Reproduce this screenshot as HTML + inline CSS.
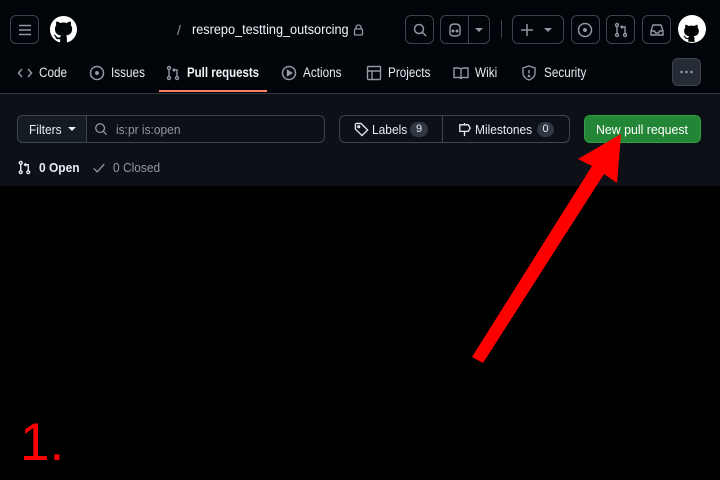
<!DOCTYPE html><html><head><style>
body{margin:0;width:720px;height:480px;background:#000;font-family:"Liberation Sans",sans-serif;position:relative;overflow:hidden;color:#e6edf3}
.top{position:absolute;left:0;top:0;width:720px;height:93px;background:#010409;border-bottom:1px solid #30363d}
.content{position:absolute;left:0;top:94px;width:720px;height:92px;background:#0d1117}
.b{position:absolute;border:1px solid #3d444d;border-radius:6px;box-sizing:border-box}
.t{position:absolute;font-size:13px;white-space:nowrap;transform-origin:left center}
.n{font-size:13.5px;transform:scaleX(0.87)}
.c{transform:scaleX(0.92)}
svg{position:absolute}
</style></head><body>
<div class="top">
<div class="b" style="left:10px;top:15px;width:29px;height:29px"></div>
<svg style="left:17px;top:22px" width="16" height="16" viewBox="0 0 16 16" fill="none" stroke="#9198a1" stroke-width="1.5"><path d="M2 3.5h12M2 8h12M2 12.5h12"/></svg>
<svg style="left:50px;top:16px" width="27" height="27" viewBox="0 0 16 16"><path fill="#fff" d="M8 0C3.58 0 0 3.580 0 8c0 3.54 2.290 6.53 5.470 7.59.4.07.55-.17.55-.38 0-.19-.01-.82-.01-1.49-2.010.37-2.530-.49-2.690-.94-.09-.23-.48-.94-.82-1.13-.28-.15-.68-.52-.01-.53.63-.01 1.080.58 1.230.82.72 1.210 1.870.87 2.330.66.07-.52.28-.87.51-1.07-1.780-.2-3.640-.89-3.640-3.950 0-.87.31-1.590.82-2.150-.08-.2-.36-1.020.08-2.120 0 0 .67-.21 2.200.82.64-.18 1.320-.27 2-.27s1.360.09 2 .27c1.530-1.040 2.200-.82 2.200-.82.44 1.100.16 1.920.08 2.120.51.56.82 1.270.82 2.150 0 3.070-1.870 3.750-3.650 3.950.29.25.54.73.54 1.480 0 1.070-.01 1.930-.01 2.200 0 .21.15.46.55.38A8.010 8.010 0 0016 8c0-4.420-3.580-8-8-8z"/></svg>
<div class="t" style="left:177px;top:22px;color:#9198a1;font-size:14px">/</div>
<div class="t" style="left:192px;top:22px;font-size:13.5px;color:#f0f6fc;transform:scaleX(0.94)">resrepo_testting_outsorcing</div>
<svg style="left:353px;top:24px" width="11" height="12" viewBox="0 0 11 12" fill="none" stroke="#9198a1" stroke-width="1.3"><rect x="1.5" y="5" width="8" height="6" rx="1"/><path d="M3 5V3.5a2.5 2.5 0 015 0V5"/></svg>
<div class="b" style="left:405px;top:15px;width:29px;height:29px"></div>
<svg style="left:412px;top:22px" width="16" height="16" viewBox="0 0 16 16" fill="none" stroke="#9198a1" stroke-width="1.5"><circle cx="7" cy="7" r="4.5"/><path d="M10.5 10.5L14 14"/></svg>
<div class="b" style="left:440px;top:15px;width:50px;height:29px"></div>
<div style="position:absolute;left:468px;top:16px;width:1px;height:27px;background:#3d444d"></div>
<svg style="left:447px;top:22px" width="16" height="16" viewBox="0 0 16 16" fill="none" stroke="#9198a1" stroke-width="1.4"><path d="M3 6c0-3 2-4 5-4s5 1 5 4v5c0 2-2 3-5 3s-5-1-5-3z"/><circle cx="6" cy="9" r=".8" fill="#9198a1"/><circle cx="10" cy="9" r=".8" fill="#9198a1"/></svg>
<svg style="left:475px;top:28px" width="8" height="5"><path d="M0 0h8L4 4z" fill="#9198a1"/></svg>
<div style="position:absolute;left:501px;top:20px;width:1px;height:18px;background:#3d444d"></div>
<div class="b" style="left:512px;top:15px;width:52px;height:29px"></div>
<svg style="left:519px;top:22px" width="16" height="16" viewBox="0 0 16 16" stroke="#9198a1" stroke-width="1.5"><path d="M8 2v12M2 8h12"/></svg>
<svg style="left:544px;top:28px" width="8" height="5"><path d="M0 0h8L4 4z" fill="#9198a1"/></svg>
<div class="b" style="left:571px;top:15px;width:29px;height:29px"></div>
<svg style="left:577px;top:22px" width="16" height="16" viewBox="0 0 16 16" fill="none" stroke="#9198a1" stroke-width="1.5"><circle cx="8" cy="8" r="6.5"/><circle cx="8" cy="8" r="1.2" fill="#9198a1"/></svg>
<div class="b" style="left:606px;top:15px;width:29px;height:29px"></div>
<svg style="left:613px;top:22px" width="16" height="16" viewBox="0 0 16 16" fill="none" stroke="#9198a1" stroke-width="1.4"><circle cx="4" cy="3" r="1.5"/><circle cx="4" cy="13" r="1.5"/><circle cx="12" cy="13" r="1.5"/><path d="M4 4.5v7M12 11.5V5H8M9.5 3.5L8 5l1.5 1.5"/></svg>
<div class="b" style="left:642px;top:15px;width:29px;height:29px"></div>
<svg style="left:649px;top:22px" width="16" height="16" viewBox="0 0 16 16" fill="none" stroke="#9198a1" stroke-width="1.4"><path d="M2 9l2-6h8l2 6v4H2zM2 9h3.5l1 2h3l1-2H14"/></svg>
<svg style="left:678px;top:15px" width="28" height="28" viewBox="0 0 16 16"><circle cx="8" cy="8" r="8" fill="#fff"/><path fill="#000" d="M5.6 15.2c.2 0 .3-.1.3-.3v-1.2c-1.6.3-2-.6-2-.6-.3-.7-.6-.9-.6-.9-.5-.4 0-.4 0-.4.6 0 .9.6.9.6.5.9 1.4.7 1.8.5 0-.4.2-.7.4-.8-1.4-.2-2.9-.7-2.9-3.1 0-.7.3-1.300.7-1.700-.1-.2-.3-.8.1-1.700 0 0 .5-.2 1.800.7a6 6 0 013.200 0c1.200-.8 1.800-.7 1.800-.7.3.9.1 1.500.1 1.700.4.4.7 1 .7 1.700 0 2.400-1.500 2.900-2.900 3.100.2.2.4.6.4 1.200v1.800c0 .2.1.3.3.3z"/></svg>
<svg style="left:17px;top:65px" width="16" height="16" viewBox="0 0 16 16" fill="none" stroke="#9198a1" stroke-width="1.5"><path d="M5 4L1.5 8 5 12M11 4l3.5 4-3.5 4"/></svg>
<div class="t n" style="left:39px;top:65px">Code</div>
<svg style="left:89px;top:65px" width="16" height="16" viewBox="0 0 16 16" fill="none" stroke="#9198a1" stroke-width="1.5"><circle cx="8" cy="8" r="6.5"/><circle cx="8" cy="8" r="1.2" fill="#9198a1"/></svg>
<div class="t n" style="left:111px;top:65px">Issues</div>
<svg style="left:165px;top:65px" width="16" height="16" viewBox="0 0 16 16" fill="none" stroke="#9198a1" stroke-width="1.4"><circle cx="4" cy="3" r="1.5"/><circle cx="4" cy="13" r="1.5"/><circle cx="12" cy="13" r="1.5"/><path d="M4 4.5v7M12 11.5V5H8M9.5 3.5L8 5l1.5 1.5"/></svg>
<div class="t n" style="left:187px;top:65px;font-weight:bold;color:#f0f6fc;transform:scaleX(0.85)">Pull requests</div>
<div style="position:absolute;left:159px;top:90px;width:108px;height:2px;background:#f78166"></div>
<svg style="left:281px;top:65px" width="16" height="16" viewBox="0 0 16 16" fill="none" stroke="#9198a1" stroke-width="1.5"><circle cx="8" cy="8" r="6.5"/><path d="M6.5 5.5v5l4-2.5z" fill="#9198a1"/></svg>
<div class="t n" style="left:303px;top:65px">Actions</div>
<svg style="left:366px;top:65px" width="16" height="16" viewBox="0 0 16 16" fill="none" stroke="#9198a1" stroke-width="1.4"><rect x="1.5" y="1.5" width="13" height="13" rx="1"/><path d="M1.5 6h13M6 6v8.5"/></svg>
<div class="t n" style="left:388px;top:65px">Projects</div>
<svg style="left:453px;top:65px" width="16" height="16" viewBox="0 0 16 16" fill="none" stroke="#9198a1" stroke-width="1.4"><path d="M1 3h4.5C7 3 8 4 8 5v9c0-1-1-1.5-2-1.5H1zM15 3h-4.5C9 3 8 4 8 5v9c0-1 1-1.5 2-1.5h5z"/></svg>
<div class="t n" style="left:475px;top:65px">Wiki</div>
<svg style="left:521px;top:65px" width="16" height="16" viewBox="0 0 16 16" fill="none" stroke="#9198a1" stroke-width="1.4"><path d="M8 1l6 2v5c0 3.5-3 6-6 7-3-1-6-3.5-6-7V3z"/><path d="M8 5v3.5"/><circle cx="8" cy="11" r=".6" fill="#9198a1"/></svg>
<div class="t n" style="left:544px;top:65px">Security</div>
<div style="position:absolute;left:672px;top:58px;width:29px;height:28px;background:#262c36;border-radius:6px;border:1px solid #3d444d;box-sizing:border-box"></div>
<svg style="left:672px;top:58px" width="29" height="28"><circle cx="9.5" cy="14" r="1.3" fill="#9198a1"/><circle cx="14.5" cy="14" r="1.3" fill="#9198a1"/><circle cx="19.5" cy="14" r="1.3" fill="#9198a1"/></svg>
</div>
<div class="content">
<div class="b" style="left:17px;top:21px;width:308px;height:28px;background:#0d1117"></div>
<div class="b" style="left:17px;top:21px;width:70px;height:28px;background:#151b23;border-radius:6px 0 0 6px"></div>
<div class="t c" style="left:29px;top:28px">Filters</div>
<svg style="left:68px;top:33px" width="8" height="5"><path d="M0 0h8L4 4z" fill="#e6edf3"/></svg>
<svg style="left:94px;top:28px" width="14" height="14" viewBox="0 0 16 16" fill="none" stroke="#9198a1" stroke-width="1.5"><circle cx="7" cy="7" r="5"/><path d="M10.5 10.5L14.5 14.5"/></svg>
<div class="t c" style="left:116px;top:28px;color:#9198a1">is:pr is:open</div>
<div class="b" style="left:339px;top:21px;width:231px;height:28px"></div>
<div style="position:absolute;left:442px;top:21px;width:1px;height:28px;background:#3d444d"></div>
<svg style="left:354px;top:28px" width="15" height="15" viewBox="0 0 16 16" fill="none" stroke="#e6edf3" stroke-width="1.4"><path d="M1.5 2.5v5l7 7 6-6-7-7h-5z"/><circle cx="5" cy="5" r="1"/></svg>
<div class="t c" style="left:372px;top:28px">Labels</div>
<div style="position:absolute;left:410px;top:28px;width:18px;height:15px;border-radius:8px;background:#2f3742;font-size:11px;text-align:center;line-height:15px">9</div>
<svg style="left:457px;top:28px" width="15" height="15" viewBox="0 0 16 16" fill="none" stroke="#e6edf3" stroke-width="1.4"><path d="M8 1v2M8 10v5M3 3h9l2 3.5-2 3.5H3z"/></svg>
<div class="t c" style="left:475px;top:28px">Milestones</div>
<div style="position:absolute;left:537px;top:28px;width:17px;height:15px;border-radius:8px;background:#2f3742;font-size:11px;text-align:center;line-height:15px">0</div>
<div style="position:absolute;left:584px;top:21px;width:117px;height:28px;background:#238636;border-radius:6px;border:1px solid #2ea043;box-sizing:border-box"></div>
<div class="t" style="left:596px;top:28px;color:#fff;transform:scaleX(0.95)">New pull request</div>
<svg style="left:17px;top:66px" width="15" height="15" viewBox="0 0 16 16" fill="none" stroke="#e6edf3" stroke-width="1.5"><circle cx="4" cy="3" r="1.5"/><circle cx="4" cy="13" r="1.5"/><circle cx="12" cy="13" r="1.5"/><path d="M4 4.5v7M12 11.5V5H8M9.5 3.5L8 5l1.5 1.5"/></svg>
<div class="t c" style="left:39px;top:66px;font-weight:bold">0 Open</div>
<svg style="left:92px;top:67px" width="14" height="14" viewBox="0 0 16 16" fill="none" stroke="#9198a1" stroke-width="1.5"><path d="M2 8.5l4 4 8-9"/></svg>
<div class="t c" style="left:113px;top:66px;color:#9198a1">0 Closed</div>
</div>
<svg style="left:0;top:0" width="720" height="480"><polygon fill="#ff0000" points="621,134 578,159 592,166 472,357 483,363 604,174 617,183"/></svg>
<div class="t" style="left:20px;top:416px;font-size:53px;line-height:53px;color:#ff0000">1.</div>
</body></html>
